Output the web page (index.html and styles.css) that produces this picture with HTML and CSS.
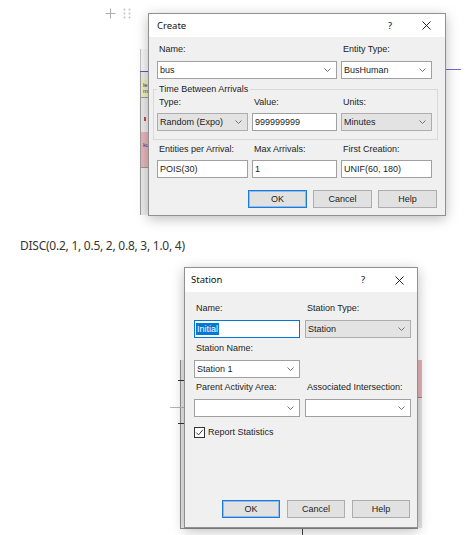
FILE: index.html
```html
<!DOCTYPE html>
<html lang="en">
<head>
<meta charset="utf-8">
<title>Dialogs</title>
<link rel="stylesheet" href="styles.css">
</head>
<body>
<div class="block-1">
  <div class="handle">
    <svg class="ico-plus" width="11" height="11" viewBox="0 0 11 11"><path d="M5.5 0.5v10M0.5 5.5h10" stroke="#adadad" stroke-width="1"/></svg>
    <svg class="ico-drag" width="8" height="11" viewBox="0 0 8 11" fill="#c2c2c2"><circle cx="1.5" cy="1.5" r="1"/><circle cx="6.5" cy="1.5" r="1"/><circle cx="1.5" cy="5.5" r="1"/><circle cx="6.5" cy="5.5" r="1"/><circle cx="1.5" cy="9.5" r="1"/><circle cx="6.5" cy="9.5" r="1"/></svg>
  </div>
  <figure class="shot shot-1">
    <div class="strip-l1">
      <div class="s-top"></div>
      <div class="s-blue"></div>
      <div class="s-light s-h7"></div>
      <div class="s-yellow"><span>le</span><span>m</span></div>
      <div class="s-line"></div>
      <div class="s-light s-h34"><div class="s-redtick"></div></div>
      <div class="s-pink"><span>ku</span></div>
      <div class="s-line"></div>
      <div class="s-light s-fill"></div>
    </div>
    <div class="dlg dlg-create">
      <div class="titlebar">
        <span class="tb-title">Create</span>
        <span class="tb-help">?</span>
        <svg class="tb-close" width="9" height="9" viewBox="0 0 9 9"><path d="M0.5 0.5L8.5 8.5M8.5 0.5L0.5 8.5" stroke="#111" stroke-width="0.9"/></svg>
      </div>
      <div class="body body-create">
        <div class="grid3 gap6">
          <div class="lbl span2">Name:</div>
          <div class="lbl">Entity Type:</div>
          <div class="ctl span2"><span>bus</span><svg class="chev" width="7" height="4" viewBox="0 0 7 4"><path d="M0.5 0.5L3.5 3.5L6.5 0.5" fill="none" stroke="#666" stroke-width="0.9"/></svg></div>
          <div class="ctl"><span>BusHuman</span><svg class="chev" width="7" height="4" viewBox="0 0 7 4"><path d="M0.5 0.5L3.5 3.5L6.5 0.5" fill="none" stroke="#666" stroke-width="0.9"/></svg></div>
        </div>
        <fieldset class="group">
          <legend>Time Between Arrivals</legend>
          <div class="grid3 gap5">
            <div class="lbl">Type:</div>
            <div class="lbl">Value:</div>
            <div class="lbl">Units:</div>
            <div class="ctl drop"><span>Random (Expo)</span><svg class="chev" width="7" height="4" viewBox="0 0 7 4"><path d="M0.5 0.5L3.5 3.5L6.5 0.5" fill="none" stroke="#666" stroke-width="0.9"/></svg></div>
            <div class="ctl"><span>999999999</span></div>
            <div class="ctl drop"><span>Minutes</span><svg class="chev" width="7" height="4" viewBox="0 0 7 4"><path d="M0.5 0.5L3.5 3.5L6.5 0.5" fill="none" stroke="#666" stroke-width="0.9"/></svg></div>
          </div>
        </fieldset>
        <div class="grid3 gap5 row3">
          <div class="lbl">Entities per Arrival:</div>
          <div class="lbl">Max Arrivals:</div>
          <div class="lbl">First Creation:</div>
          <div class="ctl"><span>POIS(30)</span></div>
          <div class="ctl"><span>1</span></div>
          <div class="ctl"><span>UNIF(60, 180)</span></div>
        </div>
        <div class="btns btns-create">
          <div class="btn default">OK</div>
          <div class="btn">Cancel</div>
          <div class="btn">Help</div>
        </div>
      </div>
    </div>
    <div class="strip-r1"></div>
  </figure>
</div>

<p class="formula">DISC(0.2, 1, 0.5, 2, 0.8, 3, 1.0, 4)</p>

<figure class="shot shot-2">
  <div class="shot-row">
    <div class="strip-l2">
      <div class="rail">
        <div class="tick t1"></div>
        <div class="hline"></div>
        <div class="tick t2"></div>
      </div>
    </div>
    <div class="dlg dlg-station">
      <div class="titlebar">
        <span class="tb-title">Station</span>
        <span class="tb-help">?</span>
        <svg class="tb-close" width="9" height="9" viewBox="0 0 9 9"><path d="M0.5 0.5L8.5 8.5M8.5 0.5L0.5 8.5" stroke="#111" stroke-width="0.9"/></svg>
      </div>
      <div class="body body-station">
        <div class="grid2 gap6">
          <div class="lbl">Name:</div>
          <div class="lbl">Station Type:</div>
          <div class="ctl focus"><span class="sel">Initial</span></div>
          <div class="ctl drop"><span>Station</span><svg class="chev" width="7" height="4" viewBox="0 0 7 4"><path d="M0.5 0.5L3.5 3.5L6.5 0.5" fill="none" stroke="#666" stroke-width="0.9"/></svg></div>
        </div>
        <div class="grid2 gap6 mt5">
          <div class="lbl">Station Name:</div>
          <div class="lbl"></div>
          <div class="ctl"><span>Station 1</span><svg class="chev" width="7" height="4" viewBox="0 0 7 4"><path d="M0.5 0.5L3.5 3.5L6.5 0.5" fill="none" stroke="#666" stroke-width="0.9"/></svg></div>
        </div>
        <div class="grid2 gap6 mt4">
          <div class="lbl">Parent Activity Area:</div>
          <div class="lbl">Associated Intersection:</div>
          <div class="ctl"><span></span><svg class="chev" width="7" height="4" viewBox="0 0 7 4"><path d="M0.5 0.5L3.5 3.5L6.5 0.5" fill="none" stroke="#666" stroke-width="0.9"/></svg></div>
          <div class="ctl"><span></span><svg class="chev" width="7" height="4" viewBox="0 0 7 4"><path d="M0.5 0.5L3.5 3.5L6.5 0.5" fill="none" stroke="#666" stroke-width="0.9"/></svg></div>
        </div>
        <div class="check-row">
          <span class="cb"><svg width="9" height="9" viewBox="0 0 9 9"><path d="M1.3 4.6L3.6 6.9L7.8 1.8" fill="none" stroke="#222" stroke-width="0.9"/></svg></span>
          <span>Report Statistics</span>
        </div>
        <div class="btns btns-station">
          <div class="btn default">OK</div>
          <div class="btn">Cancel</div>
          <div class="btn">Help</div>
        </div>
      </div>
    </div>
    <div class="strip-r2">
      <div class="r2-pink"></div>
      <div class="r2-gray"></div>
    </div>
  </div>
  <div class="baseline"><div class="vtick"></div></div>
</figure>
</body>
</html>
```

FILE: styles.css
```css
* { box-sizing: border-box; }
html, body { margin: 0; padding: 0; background: #fff; }
body {
  width: 468px;
  height: 535px;
  overflow: hidden;
  font-family: "Noto Sans", "Open Sans", sans-serif;
}

/* ---------- block 1 ---------- */
.block-1 {
  display: flex;
  align-items: flex-start;
  margin-left: 104px;
}
.handle {
  width: 36px;
  display: flex;
  align-items: flex-start;
  gap: 7px;
  padding-top: 8px;
  padding-left: 1px;
}
.shot { margin: 0; }
.shot-1 {
  display: flex;
  align-items: flex-start;
  padding-top: 13px;
}

/* left sliver of the diagram behind the Create dialog */
.strip-l1 {
  width: 8px;
  height: 166px;
  margin-top: 36px;
  display: flex;
  flex-direction: column;
}
.s-top { height: 22px; background: #f7f7f7; border-left: 1px solid #c4c4c4; }
.s-blue { height: 1px; background: #5656c4; }
.s-light { background: #ececec; border-left: 1px solid #9d9d9d; }
.s-h7 { height: 7px; }
.s-h34 { height: 34px; }
.s-fill { flex: 1; }
.s-yellow {
  height: 18px;
  background: #efefb9;
  border-left: 1px solid #9d9d9d;
  display: flex;
  flex-direction: column;
  padding: 3px 0 0 2px;
  font: 6px/6px "Liberation Sans", sans-serif;
  color: #2f2fa8;
  overflow: hidden;
}
.s-line { height: 1px; background: #9a9a9a; }
.s-redtick { width: 2px; height: 4px; margin: 19px 0 0 3px; background: #c44848; }
.s-pink {
  height: 35px;
  background: #e7b5b9;
  border-left: 1px solid #9d9d9d;
  padding: 10px 0 0 2px;
  font: 6px/6px "Liberation Sans", sans-serif;
  color: #2f2fa8;
  overflow: hidden;
}

.strip-r1 {
  width: 15px;
  height: 1px;
  margin-top: 56px;
  background: #6c6cd6;
}

/* ---------- dialogs ---------- */
.dlg {
  background: #f0f0f0;
  border: 1px solid #909090;
  box-shadow: 0 3px 12px rgba(0, 0, 0, 0.26);
  font: 9px/11px "Liberation Sans", Arial, sans-serif;
  color: #1c1c1c;
  display: flex;
  flex-direction: column;
  position: relative;
}
.dlg-create { width: 298px; height: 203px; }
.dlg-station { width: 234px; height: 261px; }

.titlebar {
  background: #fff;
  display: flex;
  align-items: center;
  font: 9.5px/12px "Noto Sans", "Open Sans", sans-serif;
  color: #111;
  flex: none;
}
.dlg-create .titlebar { height: 23px; padding: 0 14px 0 8px; }
.dlg-station .titlebar { height: 24px; padding: 0 13px 0 6px; }
.tb-help { margin-left: auto; width: 10px; text-align: center; }
.tb-close { margin-left: 27px; flex: none; }

.body { flex: 1; display: flex; flex-direction: column; }
.body-create { padding: 7px 13px 7px 8px; }
.body-station { padding: 11px 6px 9px 9px; }

.grid3 {
  display: grid;
  grid-template-columns: 91px 85px 91px;
  column-gap: 4px;
}
.grid2 {
  display: grid;
  grid-template-columns: 106px 106px;
  column-gap: 5px;
}
.gap6 { row-gap: 6px; }
.gap5 { row-gap: 5px; }
.mt5 { margin-top: 5px; }
.mt4 { margin-top: 4px; }
.span2 { grid-column: span 2; }

.lbl {
  height: 11px;
  line-height: 11px;
  padding-left: 2px;
  white-space: nowrap;
}

.ctl {
  height: 18px;
  border: 1px solid #a0a0a0;
  background: #fff;
  display: flex;
  align-items: center;
  padding: 0 5px 0 2px;
  white-space: nowrap;
  overflow: hidden;
}
.ctl.drop { background: #e3e3e3; border-color: #adadad; }
.ctl.focus { border-color: #0078d7; padding-left: 1px; }
.sel { background: #0078d7; color: #fff; padding: 0 1px; line-height: 12px; }
.chev { margin-left: auto; flex: none; }

.group {
  margin: 5px -6px 0 -4px;
  padding: 2px 5px 8px 3px;
  border: 1px solid #d9d9d9;
  min-width: 0;
}
.group legend {
  padding: 0 2px;
  line-height: 11px;
  font: inherit;
}
.row3 { margin-top: 4px; }

.btns { display: flex; justify-content: flex-end; }
.btns-create { gap: 6px; margin-top: 12px; margin-right: -5px; }
.btns-create .btn { width: 59px; }
.btns-station { gap: 7px; margin-top: auto; margin-right: 1px; }
.btns-station .btn { width: 58px; }
.btn {
  height: 18px;
  border: 1px solid #adadad;
  background: #e1e1e1;
  display: flex;
  align-items: center;
  justify-content: center;
}
.btn.default { border-color: #1f7ad6; box-shadow: inset 0 0 0 1px #8cbdf0; }

.check-row {
  display: flex;
  align-items: center;
  gap: 3px;
  margin-top: 10px;
}
.cb {
  width: 11px;
  height: 11px;
  border: 1px solid #333;
  background: #fff;
  display: flex;
  align-items: center;
  justify-content: center;
}
.cb svg { display: block; }

/* ---------- formula text ---------- */
.formula {
  margin: 20px 0 0 0;
  padding-left: 20px;
  font: 12px/20px "Noto Sans", "Open Sans", sans-serif;
  letter-spacing: -0.25px;
  color: #37352f;
}

/* ---------- block 2 ---------- */
.shot-2 {
  margin-left: 170px;
  padding-top: 11px;
  display: flex;
  flex-direction: column;
}
.shot-row { display: flex; }
.strip-l2 {
  width: 14px;
  padding-top: 93px;
  display: flex;
  flex-direction: column;
}
.rail {
  flex: 1;
  margin-left: 10px;
  border-left: 1px solid #8e8e8e;
  background: #ebebeb;
}
.tick { width: 7px; height: 1px; background: #333; margin-left: -3px; }
.t1 { margin-top: 20px; }
.t2 { margin-top: 15px; }
.hline { width: 15px; height: 1px; margin: 26px 0 0 -11px; background: #b4b4b4; }

.strip-r2 {
  width: 4px;
  padding-top: 93px;
  display: flex;
  flex-direction: column;
}
.r2-pink { height: 38px; background: #e6b4b8; border-bottom: 1px solid #8e8e8e; }
.r2-gray { flex: 1; background: #e4e4e4; }

.baseline {
  margin-left: 10px;
  width: 238px;
  border-top: 1px solid #8e8e8e;
}
.vtick { margin-left: 122px; width: 1px; height: 7px; background: #444; }
```
